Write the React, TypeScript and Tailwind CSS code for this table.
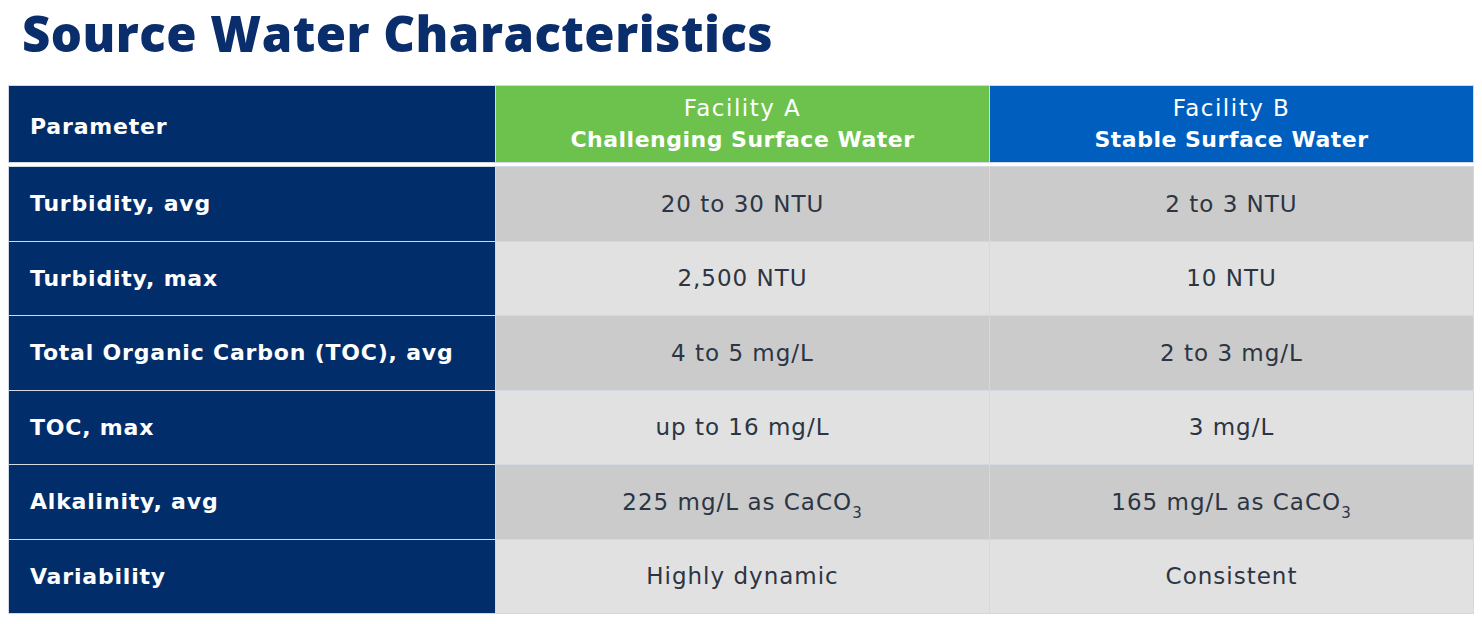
const rows: { label: string; a: React.ReactNode; b: React.ReactNode }[] = [
  { label: "Turbidity, avg", a: "20 to 30 NTU", b: "2 to 3 NTU" },
  { label: "Turbidity, max", a: "2,500 NTU", b: "10 NTU" },
  { label: "Total Organic Carbon (TOC), avg", a: "4 to 5 mg/L", b: "2 to 3 mg/L" },
  { label: "TOC, max", a: "up to 16 mg/L", b: "3 mg/L" },
  {
    label: "Alkalinity, avg",
    a: (
      <>
        225 mg/L as CaCO<sub className="text-[15px] align-[-5px]">3</sub>
      </>
    ),
    b: (
      <>
        165 mg/L as CaCO<sub className="text-[15px] align-[-5px]">3</sub>
      </>
    ),
  },
  { label: "Variability", a: "Highly dynamic", b: "Consistent" },
];

const App = () => {
  return (
    <div className="w-[1482px] h-[624px] bg-white font-['DejaVu_Sans',sans-serif] overflow-hidden">
      <h1 className="pl-[22px] pt-[2px] h-[80px] font-['Open_Sans',sans-serif] text-[49px] leading-[62px] font-extrabold tracking-[0.5px] text-[#0a2d6b]">
        Source Water Characteristics
      </h1>
      <div className="ml-[8px] mt-[5px] w-[1466px]">
        <div className="grid grid-cols-[486px_493px_483px] gap-px bg-[#d3d9e2] p-px">
          <div className="h-[76px] bg-[#022d6b] flex items-center pl-[21px] pt-[4px] text-white font-bold text-[22px] tracking-[0.8px]">
            Parameter
          </div>
          <div className="h-[76px] bg-[#6cc24c] flex flex-col items-center justify-center text-white leading-[32px]">
            <span className="text-[23px] tracking-[1.5px]">Facility A</span>
            <span className="font-bold text-[22px] tracking-[0.5px]">Challenging Surface Water</span>
          </div>
          <div className="h-[76px] bg-[#005ebf] flex flex-col items-center justify-center text-white leading-[32px]">
            <span className="text-[23px] tracking-[1.5px]">Facility B</span>
            <span className="font-bold text-[22px] tracking-[0.5px]">Stable Surface Water</span>
          </div>
        </div>
        <div className="h-[3px] bg-white" />
        <div className="grid grid-cols-[486px_493px_483px] gap-px bg-[#d3d9e2] p-px">
          {rows.map((row, index) => (
            <div key={index} className="contents">
              <div className="h-[73.5px] bg-[#022d6b] flex items-center pl-[21px] text-white font-bold text-[22px] tracking-[0.8px]">
                {row.label}
              </div>
              <div
                className={`h-[73.5px] flex items-center justify-center text-[#2c3543] text-[23px] tracking-[1px] ${
                  index % 2 === 0 ? "bg-[#cbcbcb]" : "bg-[#e1e1e1]"
                }`}
              >
                <span>{row.a}</span>
              </div>
              <div
                className={`h-[73.5px] flex items-center justify-center text-[#2c3543] text-[23px] tracking-[1px] ${
                  index % 2 === 0 ? "bg-[#cbcbcb]" : "bg-[#e1e1e1]"
                }`}
              >
                <span>{row.b}</span>
              </div>
            </div>
          ))}
        </div>
      </div>
    </div>
  );
};

export default App;
